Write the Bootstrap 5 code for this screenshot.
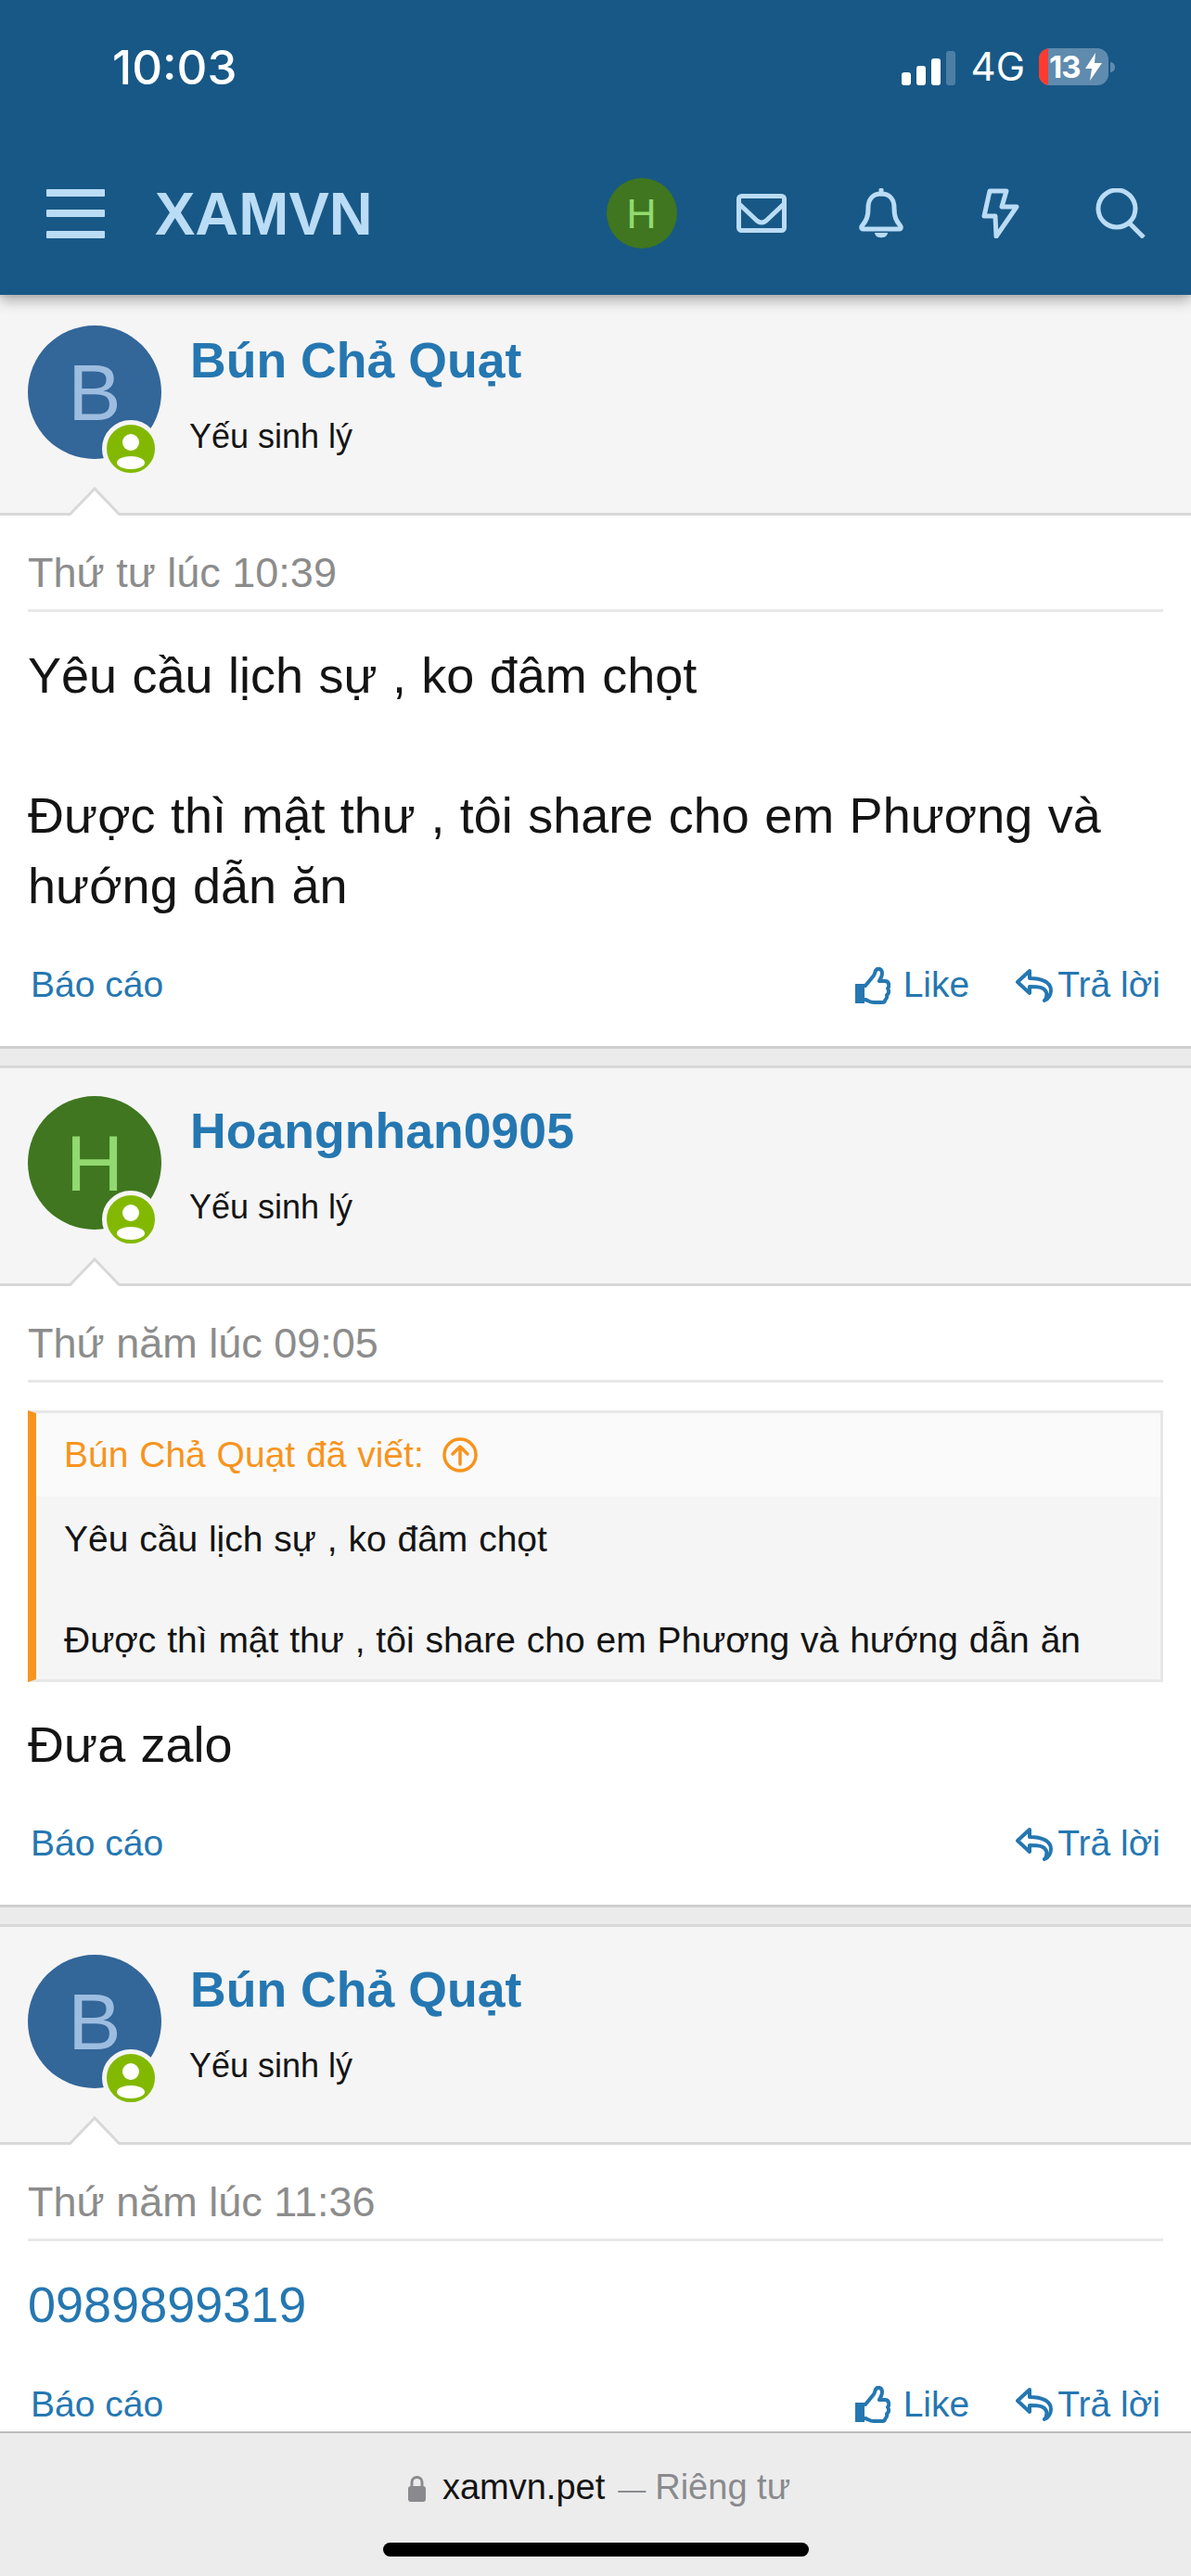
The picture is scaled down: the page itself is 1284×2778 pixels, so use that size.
<!DOCTYPE html>
<html lang="vi">
<head>
  <meta charset="UTF-8">
  <meta name="viewport" content="width=device-width, initial-scale=1.0">
  <title>XAMVN</title>
  <link href="https://cdn.jsdelivr.net/npm/bootstrap@5.3.0/dist/css/bootstrap.min.css" rel="stylesheet">
  <style>
    html, body { height: 2778px; }
    body {
      background-color: #ebebeb;
      font-family: "Liberation Sans", Arial, sans-serif;
      color: #141414;
      line-height: 1.4;
    }
    /* top bar */
    .app-top {
      background-color: #185886;
      height: 318px;
      box-shadow: 0 6px 14px rgba(0, 0, 0, .3);
      z-index: 5;
      color: #bbdcf5;
    }
    .status-row { height: 144px; padding: 0 82px 0 121px; color: #fff; }
    .status-time { font-family: Inter, "Liberation Sans", sans-serif; font-size: 51px; font-weight: 500; line-height: 1; }
    .signal { height: 37px; gap: 6px; margin-right: 17px; margin-top: 3px; }
    .signal i { width: 10px; background: #fff; border-radius: 3px; display: block; }
    .signal i.off { background: #4c7fa5; }
    .net-label { font-family: Inter, "Liberation Sans", sans-serif; font-size: 42px; line-height: 1; margin-right: 15px; }
    .battery { width: 75px; height: 40px; background: #5f8bae; border-radius: 12px; }
    .battery-low { width: 10px; background: #ff3b30; }
    .battery-num { font-family: Inter, "Liberation Sans", sans-serif; font-size: 33px; font-weight: 700; line-height: 40px; padding-left: 1px; letter-spacing: -1px; }
    .battery-nub { width: 5px; height: 11px; background: #5f8bae; border-radius: 0 5px 5px 0; margin-left: 2px; }
    .nav-row { height: 174px; padding: 0 12px 2px 50px; }
    .burger { width: 63px; height: 53px; margin-right: 54px; }
    .burger i { display: block; height: 8px; background: #bbdcf5; border-radius: 1px; }
    .brand-name { font-size: 65px; font-weight: 700; color: #bbdcf5; line-height: 1; }
    .nav-slot { width: 129px; }
    .nav-avatar { width: 76px; height: 76px; background: #3f761f; color: #91d970; font-size: 45px; line-height: 1; }
    .nav-slot svg { display: block; fill: none; stroke: #bbdcf5; stroke-width: 5; stroke-linecap: round; stroke-linejoin: round; }

    /* thread */
    .thread { height: 2304px; padding-top: 3px; }
    .post { background: #fff; border-top: 3px solid #d8d8d8; border-bottom: 3px solid #cfcfcf; margin-bottom: 18px; }
    .post-first { border-top: 0; }
    .post-head { background: #f5f5f5; height: 235px; padding: 30px 30px 0; border-bottom: 3px solid #d8d8d8; }
    .avatar-wrap { width: 144px; height: 144px; margin-right: 31px; }
    .avatar-b { background: #336699; color: #9dbde0; }
    .avatar-h { background: #3f761f; color: #91d970; }
    .avatar-circle { width: 144px; height: 144px; font-size: 86px; line-height: 1; }
    .online-dot {
      position: absolute;
      right: 2px;
      bottom: -20px;
      width: 62px;
      height: 62px;
      border: 5px solid #f5f5f5;
      border-radius: 50%;
      background: #82b900;
    }
    .online-dot svg { display: block; }
    .post-arrow { position: absolute; left: 75px; bottom: -3px; display: block; }
    .user-name { font-size: 53.6px; line-height: 75.6px; font-weight: 700; color: #2577b1; text-decoration: none; display: block; }
    .user-title { font-size: 36px; margin: 19px 0 0 -1px; }
    .post-body { padding: 30px 30px 38px; }
    .post-date { font-size: 45px; color: #8c8c8c; padding-bottom: 8px; border-bottom: 3px solid #e8e8e8; }
    .post-text { font-size: 54px; margin-top: 31px; word-spacing: 1.4px; }
    .post-text a { color: #2577b1; text-decoration: none; }
    .post-actions { font-size: 39px; margin-top: 42px; padding: 0 3px; }
    .post-actions a { color: #2577b1; text-decoration: none; }
    .post-actions svg { display: block; fill: none; stroke: #2577b1; stroke-width: 4; stroke-linejoin: round; stroke-linecap: round; }
    .like-icon { margin-right: 14px; }
    .reply-icon { margin-right: 5px; }
    .reply-link { margin-left: 50px; }

    /* quote */
    .quote-box {
      margin-top: 30px;
      background: #f5f5f5;
      border: 3px solid #e7e7e7;
      border-left: 9px solid #f7941d;
      font-size: 39px;
      word-spacing: 1px;
    }
    .quote-head { background: #fafafa; height: 90px; padding: 0 0 0 30px; color: #f7941d; }
    .quote-head svg { display: block; margin-left: 20px; fill: none; stroke: #f7941d; stroke-width: 3.5; stroke-linecap: round; stroke-linejoin: round; }
    .quote-text { padding: 19px 30px 14px; }
    .quote-after { margin-top: 30px; }

    /* browser bar */
    .browser-bar { background: #ececec; border-top: 2px solid #bdbdbd; height: 156px; padding: 31px 0 0 8px; }
    .browser-url { font-size: 38px; line-height: 54px; gap: 18px; }
    .url-dim { color: #8a8a8e; font-size: 38px; margin-left: 14px; }
    .url-dash { font-size: 30px; margin-right: 10px; }
    .home-bar { width: 459px; height: 15px; background: #000; border-radius: 8px; margin: 30px 8px 0 0; }
  </style>
</head>
<body class="overflow-hidden">

  <!-- Top bar -->
  <header class="app-top position-relative">
    <div class="status-row d-flex align-items-center">
      <span class="status-time">10:03</span>
      <div class="ms-auto d-flex align-items-center">
        <div class="signal d-flex align-items-end">
          <i style="height: 14px"></i>
          <i style="height: 21px"></i>
          <i style="height: 29px"></i>
          <i class="off" style="height: 37px"></i>
        </div>
        <span class="net-label">4G</span>
        <div class="battery d-flex overflow-hidden text-white">
          <div class="battery-low"></div>
          <span class="battery-num">13</span>
          <svg width="20" height="30" viewBox="0 0 20 30" class="align-self-center ms-1"><path d="M12 0 L1 17 H8 L6 30 L19 11 H11 Z" fill="#fff"/></svg>
        </div>
        <div class="battery-nub"></div>
      </div>
    </div>
    <nav class="nav-row d-flex align-items-center">
      <div class="burger d-flex flex-column justify-content-between"><i></i><i></i><i></i></div>
      <span class="brand-name">XAMVN</span>
      <div class="ms-auto d-flex align-items-center">
        <div class="nav-slot d-flex justify-content-center">
          <div class="nav-avatar rounded-circle d-flex align-items-center justify-content-center">H</div>
        </div>
        <div class="nav-slot d-flex justify-content-center">
          <svg width="54" height="42" viewBox="0 0 54 42">
            <rect x="2.5" y="2.5" width="49" height="37" rx="3"/>
            <path d="M3 11 L22 29 Q27 33 32 29 L51 11"/>
          </svg>
        </div>
        <div class="nav-slot d-flex justify-content-center">
          <svg width="48" height="54" viewBox="0 0 48 54">
            <path d="M24 6 C14 6 10 13 10 21 C10 31 8 35 3 41 Q2 44 5 44 H43 Q46 44 45 41 C40 35 38 31 38 21 C38 13 34 6 24 6 Z"/>
            <path d="M24 2 V6"/>
            <path d="M17 48 H31 C31 55 17 55 17 48 Z" fill="#bbdcf5" stroke="none"/>
          </svg>
        </div>
        <div class="nav-slot d-flex justify-content-center">
          <svg width="41" height="54" viewBox="0 0 41 54">
            <path d="M9 3 H27 L22 20 H38 L16 52 L15 30 H3 Z"/>
          </svg>
        </div>
        <div class="nav-slot d-flex justify-content-center">
          <svg width="54" height="54" viewBox="0 0 54 54">
            <circle cx="23" cy="22" r="20"/>
            <path d="M36 37 L52 53" stroke-linecap="butt"/>
          </svg>
        </div>
      </div>
    </nav>
  </header>

  <!-- Posts -->
  <main class="thread overflow-hidden">

    <article class="post post-first">
      <div class="post-head d-flex position-relative">
        <div class="avatar-wrap position-relative">
          <div class="avatar-circle avatar-b rounded-circle d-flex align-items-center justify-content-center">B</div>
          <div class="online-dot">
            <svg width="52" height="52" viewBox="0 0 52 52"><circle cx="26" cy="19" r="9" fill="#fff"/><ellipse cx="26" cy="41" rx="15" ry="7" fill="#fff"/></svg>
          </div>
        </div>
        <div>
          <a class="user-name" href="#">Bún Chả Quạt</a>
          <div class="user-title">Yếu sinh lý</div>
        </div>
        <svg class="post-arrow" width="54" height="31" viewBox="0 0 54 31"><path d="M1 31 L27 2 L53 31 Z" fill="#fff"/><path d="M1 29 L27 2 L53 29" fill="none" stroke="#d8d8d8" stroke-width="3"/></svg>
      </div>
      <div class="post-body">
        <div class="post-date">Thứ tư lúc 10:39</div>
        <div class="post-text">Yêu cầu lịch sự , ko đâm chọt<br><br>Được thì mật thư , tôi share cho em Phương và hướng dẫn ăn</div>
        <div class="post-actions d-flex align-items-center">
          <a href="#">Báo cáo</a>
          <a href="#" class="ms-auto d-flex align-items-center">
            <svg width="38" height="40" viewBox="0 0 38 40" class="like-icon"><path d="M0 18 H10 V39 H0 Z" fill="#2577b1" stroke="none"/><path d="M11 20 L20 9 C22 6 21 3 24 2 C29 1 30 6 28 11 L26 15 H32 C37 15 37 21 35 23 C37 26 36 29 34 30 C35 33 33 35 32 36 C32 38 30 38 27 38 L20 38 C16 38 14 36 11 35"/></svg>
            Like
          </a>
          <a href="#" class="d-flex align-items-center reply-link">
            <svg width="40" height="36" viewBox="0 0 40 36" class="reply-icon"><path d="M15 2 L2 14 L15 26 V19 C26 19 31 20 33 25 C34 29 33 32 31 34 C36 32 38 27 38 23 C38 14 28 10 15 10 Z"/></svg>
            Trả lời
          </a>
        </div>
      </div>
    </article>

    <article class="post">
      <div class="post-head d-flex position-relative">
        <div class="avatar-wrap position-relative">
          <div class="avatar-circle avatar-h rounded-circle d-flex align-items-center justify-content-center">H</div>
          <div class="online-dot">
            <svg width="52" height="52" viewBox="0 0 52 52"><circle cx="26" cy="19" r="9" fill="#fff"/><ellipse cx="26" cy="41" rx="15" ry="7" fill="#fff"/></svg>
          </div>
        </div>
        <div>
          <a class="user-name" href="#">Hoangnhan0905</a>
          <div class="user-title">Yếu sinh lý</div>
        </div>
        <svg class="post-arrow" width="54" height="31" viewBox="0 0 54 31"><path d="M1 31 L27 2 L53 31 Z" fill="#fff"/><path d="M1 29 L27 2 L53 29" fill="none" stroke="#d8d8d8" stroke-width="3"/></svg>
      </div>
      <div class="post-body">
        <div class="post-date">Thứ năm lúc 09:05</div>
        <div class="quote-box">
          <div class="quote-head d-flex align-items-center">
            Bún Chả Quạt đã viết:
            <svg width="38" height="38" viewBox="0 0 38 38"><circle cx="19" cy="19" r="17"/><path d="M19 29 V10 M11 18 L19 10 L27 18"/></svg>
          </div>
          <div class="quote-text">Yêu cầu lịch sự , ko đâm chọt<br><br>Được thì mật thư , tôi share cho em Phương và hướng dẫn ăn</div>
        </div>
        <div class="post-text quote-after">Đưa zalo</div>
        <div class="post-actions d-flex align-items-center">
          <a href="#">Báo cáo</a>
          <a href="#" class="d-flex align-items-center ms-auto">
            <svg width="40" height="36" viewBox="0 0 40 36" class="reply-icon"><path d="M15 2 L2 14 L15 26 V19 C26 19 31 20 33 25 C34 29 33 32 31 34 C36 32 38 27 38 23 C38 14 28 10 15 10 Z"/></svg>
            Trả lời
          </a>
        </div>
      </div>
    </article>

    <article class="post">
      <div class="post-head d-flex position-relative">
        <div class="avatar-wrap position-relative">
          <div class="avatar-circle avatar-b rounded-circle d-flex align-items-center justify-content-center">B</div>
          <div class="online-dot">
            <svg width="52" height="52" viewBox="0 0 52 52"><circle cx="26" cy="19" r="9" fill="#fff"/><ellipse cx="26" cy="41" rx="15" ry="7" fill="#fff"/></svg>
          </div>
        </div>
        <div>
          <a class="user-name" href="#">Bún Chả Quạt</a>
          <div class="user-title">Yếu sinh lý</div>
        </div>
        <svg class="post-arrow" width="54" height="31" viewBox="0 0 54 31"><path d="M1 31 L27 2 L53 31 Z" fill="#fff"/><path d="M1 29 L27 2 L53 29" fill="none" stroke="#d8d8d8" stroke-width="3"/></svg>
      </div>
      <div class="post-body">
        <div class="post-date">Thứ năm lúc 11:36</div>
        <div class="post-text"><a href="#">0989899319</a></div>
        <div class="post-actions d-flex align-items-center">
          <a href="#">Báo cáo</a>
          <a href="#" class="ms-auto d-flex align-items-center">
            <svg width="38" height="40" viewBox="0 0 38 40" class="like-icon"><path d="M0 18 H10 V39 H0 Z" fill="#2577b1" stroke="none"/><path d="M11 20 L20 9 C22 6 21 3 24 2 C29 1 30 6 28 11 L26 15 H32 C37 15 37 21 35 23 C37 26 36 29 34 30 C35 33 33 35 32 36 C32 38 30 38 27 38 L20 38 C16 38 14 36 11 35"/></svg>
            Like
          </a>
          <a href="#" class="d-flex align-items-center reply-link">
            <svg width="40" height="36" viewBox="0 0 40 36" class="reply-icon"><path d="M15 2 L2 14 L15 26 V19 C26 19 31 20 33 25 C34 29 33 32 31 34 C36 32 38 27 38 23 C38 14 28 10 15 10 Z"/></svg>
            Trả lời
          </a>
        </div>
      </div>
    </article>
  </main>

  <!-- Browser bar -->
  <footer class="browser-bar d-flex flex-column align-items-center">
    <div class="browser-url d-flex align-items-center">
      <svg width="19" height="28" viewBox="0 0 19 28"><path d="M4 12 V7 a5.5 5.5 0 0 1 11 0 V12" fill="none" stroke="#8a8a8e" stroke-width="3"/><rect x="0" y="11" width="19" height="17" rx="3" fill="#8a8a8e"/></svg>
      <span>xamvn.pet<span class="url-dim"><span class="url-dash">—</span>Riêng tư</span></span>
    </div>
    <div class="home-bar"></div>
  </footer>

</body>
</html>
